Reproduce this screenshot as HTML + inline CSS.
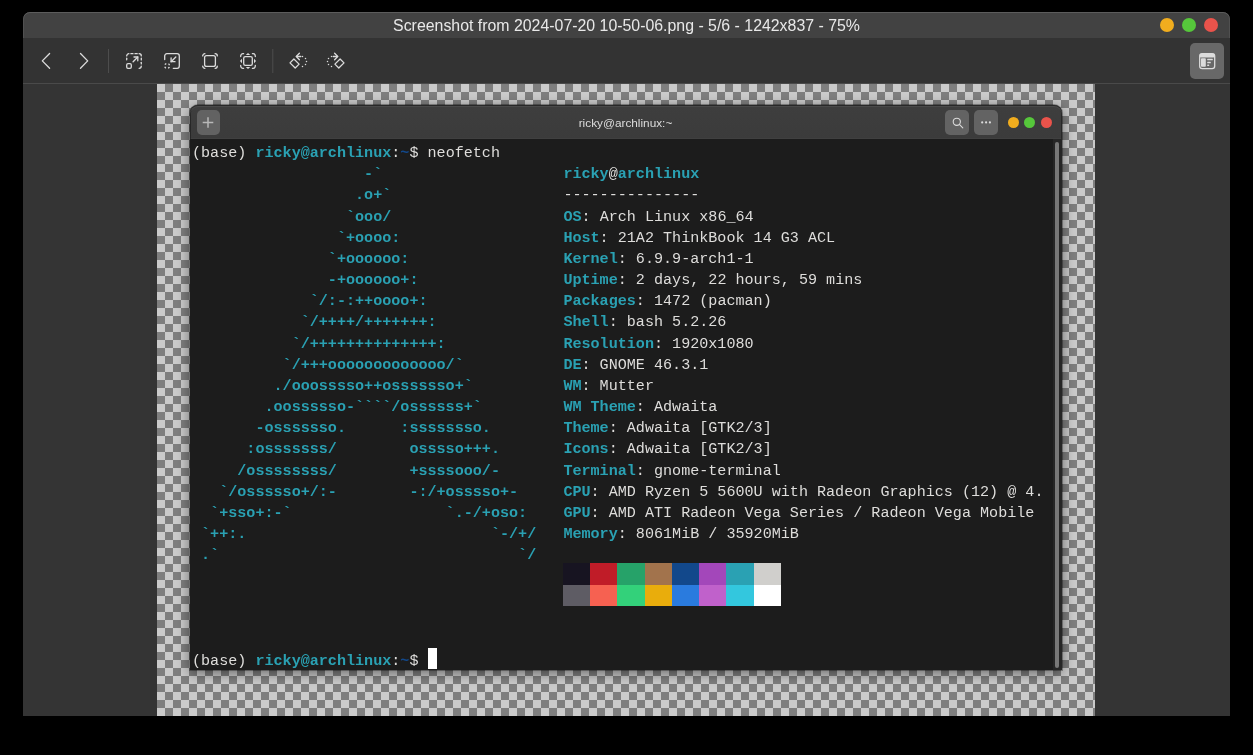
<!DOCTYPE html>
<html><head><meta charset="utf-8">
<style>
html,body{margin:0;padding:0;}
#win,#txt,#title,#ttitle{-webkit-font-smoothing:antialiased;}
#txt,#title,#ttitle{will-change:transform;}
body{width:1253px;height:755px;background:#000;position:relative;overflow:hidden;font-family:"Liberation Sans",sans-serif;}
.abs{position:absolute;}
#win{left:23px;top:12px;width:1207px;height:704px;background:#343434;border-radius:7px 7px 0 0;overflow:hidden;}
#titlebar{left:0;top:0;width:1207px;height:26px;background:#424242;box-shadow:inset 0 1px 0 #5c5c5c, inset 1px 0 0 #505050, inset -1px 0 0 #505050;border-radius:7px 7px 0 0;}
#title{left:0;top:1px;width:1207px;height:26px;line-height:26px;text-align:center;color:#e8e8e8;font-size:15.88px;}
.dot{position:absolute;width:14px;height:14px;border-radius:50%;}
#toolbar{left:0;top:26px;width:1207px;height:45px;background:#333333;}
#tbline{left:0;top:71px;width:1207px;height:1px;background:#4a4a4a;}
#content{left:0;top:72px;width:1207px;height:632px;background:#343434;}
#checker{left:134px;top:0;width:938px;height:632px;}
#term{left:167px;top:21px;width:872px;height:565px;box-shadow:0 0 0 1px rgba(0,0,0,0.3),0 3px 14px rgba(0,0,0,0.5);border-radius:8px 8px 0 0;}
#thead{left:0;top:0;width:872px;height:34px;background:linear-gradient(#3e3e3e,#3b3b3b);border-radius:8px 8px 0 0;box-shadow:inset 0 1px 0 rgba(0,0,0,0.45),inset 0 2px 0 #4a4a4a,inset 1px 0 0 rgba(0,0,0,0.35),inset -1px 0 0 rgba(0,0,0,0.35),inset 0 -1px 0 #404040;}
#tbody{left:0;top:34px;width:872px;height:531px;background:#1c1c1c;}
#ttitle{left:0;top:1px;width:871px;height:34px;line-height:34px;text-align:center;color:#dcdcdc;font-size:11.8px;}
.tbtn{position:absolute;background:#626262;border-radius:5px;}
pre{margin:0;font-family:"Liberation Mono",monospace;font-size:15.1px;line-height:21.17px;color:#dedddb;}
.c{color:#2aa1b3;font-weight:bold;}
.cn{color:#2aa1b3;}
.bl{color:#12488b;font-weight:bold;}
#txt{left:2px;top:38.3px;}
#pal{left:373px;top:458px;width:218px;height:42px;}
#cursor{left:238px;top:543px;width:9px;height:21px;background:#fff;}
#sbtrough{left:863px;top:34px;width:9px;height:531px;background:#262626;}
#sbthumb{left:865px;top:37px;width:3.5px;height:526px;background:#787878;border-radius:2px;}
</style></head><body>
<div id="win" class="abs">
  <div id="titlebar" class="abs"></div>
  <div id="title" class="abs">Screenshot from 2024-07-20 10-50-06.png - 5/6 - 1242x837 - 75%</div>
  <div class="dot" style="left:1137px;top:6px;background:#f1ad1e;"></div>
  <div class="dot" style="left:1159px;top:6px;background:#56c73b;"></div>
  <div class="dot" style="left:1181px;top:6px;background:#ea534b;"></div>
  <div id="toolbar" class="abs"></div>
  <div id="tbline" class="abs"></div>
  <div id="content" class="abs">
    <svg id="checker" class="abs" width="938" height="632" shape-rendering="crispEdges">
      <defs><pattern id="ck" width="16" height="16" patternUnits="userSpaceOnUse">
        <rect width="16" height="16" fill="#cbcbcb"/><rect x="8" y="0" width="8" height="8" fill="#7f7f7f"/><rect x="0" y="8" width="8" height="8" fill="#7f7f7f"/>
      </pattern></defs>
      <rect width="938" height="632" fill="url(#ck)"/>
    </svg>
    <div id="term" class="abs">
      <div id="thead" class="abs"></div>
      <div id="ttitle" class="abs">ricky@archlinux:~</div>
      <div id="tbody" class="abs"></div>
<pre id="txt" class="abs">(base) <span class="c">ricky@archlinux</span>:<span class="bl">~</span>$ neofetch
<span class="c">                   -`</span>                    <span class="c">ricky</span>@<span class="c">archlinux</span>
<span class="c">                  .o+`</span>                   ---------------
<span class="c">                 `ooo/</span>                   <span class="c">OS</span>: Arch Linux x86_64
<span class="c">                `+oooo:</span>                  <span class="c">Host</span>: 21A2 ThinkBook 14 G3 ACL
<span class="c">               `+oooooo:</span>                 <span class="c">Kernel</span>: 6.9.9-arch1-1
<span class="c">               -+oooooo+:</span>                <span class="c">Uptime</span>: 2 days, 22 hours, 59 mins
<span class="c">             `/:-:++oooo+:</span>               <span class="c">Packages</span>: 1472 (pacman)
<span class="c">            `/++++/+++++++:</span>              <span class="c">Shell</span>: bash 5.2.26
<span class="c">           `/++++++++++++++:</span>             <span class="c">Resolution</span>: 1920x1080
<span class="c">          `/+++ooooooooooooo/`</span>           <span class="c">DE</span>: GNOME 46.3.1
<span class="c">         ./ooosssso++osssssso+`</span>          <span class="c">WM</span>: Mutter
<span class="c">        .oossssso-````/ossssss+`</span>         <span class="c">WM Theme</span>: Adwaita
<span class="c">       -osssssso.      :ssssssso.</span>        <span class="c">Theme</span>: Adwaita [GTK2/3]
<span class="c">      :osssssss/        osssso+++.</span>       <span class="c">Icons</span>: Adwaita [GTK2/3]
<span class="c">     /ossssssss/        +ssssooo/-</span>       <span class="c">Terminal</span>: gnome-terminal
<span class="c">   `/ossssso+/:-        -:/+osssso+-</span>     <span class="c">CPU</span>: AMD Ryzen 5 5600U with Radeon Graphics (12) @ 4.
<span class="c">  `+sso+:-`                 `.-/+oso:</span>    <span class="c">GPU</span>: AMD ATI Radeon Vega Series / Radeon Vega Mobile
<span class="c"> `++:.                           `-/+/</span>   <span class="c">Memory</span>: 8061MiB / 35920MiB
<span class="c"> .`                                 `/</span>




(base) <span class="c">ricky@archlinux</span>:<span class="bl">~</span>$ </pre><div id="pal" class="abs"><div class="abs" style="left:0.00px;top:0;width:27.3px;height:21.5px;background:#171421"></div><div class="abs" style="left:27.23px;top:0;width:27.3px;height:21.5px;background:#c01c28"></div><div class="abs" style="left:54.46px;top:0;width:27.3px;height:21.5px;background:#26a269"></div><div class="abs" style="left:81.69px;top:0;width:27.3px;height:21.5px;background:#a2734c"></div><div class="abs" style="left:108.92px;top:0;width:27.3px;height:21.5px;background:#12488b"></div><div class="abs" style="left:136.15px;top:0;width:27.3px;height:21.5px;background:#a347ba"></div><div class="abs" style="left:163.38px;top:0;width:27.3px;height:21.5px;background:#2aa1b3"></div><div class="abs" style="left:190.61px;top:0;width:27.3px;height:21.5px;background:#d0cfcc"></div><div class="abs" style="left:0.00px;top:21.5px;width:27.3px;height:21.3px;background:#5e5c64"></div><div class="abs" style="left:27.23px;top:21.5px;width:27.3px;height:21.3px;background:#f66151"></div><div class="abs" style="left:54.46px;top:21.5px;width:27.3px;height:21.3px;background:#33d17a"></div><div class="abs" style="left:81.69px;top:21.5px;width:27.3px;height:21.3px;background:#e9ad0c"></div><div class="abs" style="left:108.92px;top:21.5px;width:27.3px;height:21.3px;background:#2a7bde"></div><div class="abs" style="left:136.15px;top:21.5px;width:27.3px;height:21.3px;background:#c061cb"></div><div class="abs" style="left:163.38px;top:21.5px;width:27.3px;height:21.3px;background:#33c7de"></div><div class="abs" style="left:190.61px;top:21.5px;width:27.3px;height:21.3px;background:#ffffff"></div></div><div id="cursor" class="abs"></div><div id="sbtrough" class="abs"></div><div id="sbthumb" class="abs"></div>
    </div>
  </div>
</div>
<div class="abs" style="left:1190px;top:43px;width:34px;height:36px;background:#686868;border-radius:5px;"></div>
<div class="abs" style="left:197px;top:110px;width:23px;height:25px;background:#626262;border-radius:5px;"></div>
<div class="abs" style="left:945px;top:110px;width:24px;height:25px;background:#636363;border-radius:5px;"></div>
<div class="abs" style="left:974px;top:110px;width:24px;height:25px;background:#636363;border-radius:5px;"></div>
<div class="dot" style="left:1007.8px;top:117px;width:11px;height:11px;background:#f1ad1e;"></div>
<div class="dot" style="left:1024.4px;top:117px;width:11px;height:11px;background:#56c73b;"></div>
<div class="dot" style="left:1040.9px;top:117px;width:11px;height:11px;background:#ea534b;"></div>
<svg class="abs" style="left:0;top:0;" width="1253" height="755" viewBox="0 0 1253 755">
<g fill="none" stroke="#dcdcdc" stroke-width="1.3" stroke-linecap="round" stroke-linejoin="round">
 <g transform="translate(34,49)"><path d="M15.6,4.5 L8.3,11.9 L15.6,19.3"/></g>
 <g transform="translate(74,49)"><path d="M6.5,4.5 L13.7,11.9 L6.5,19.3"/></g>
 <g transform="translate(122,49)">
  <path d="M4.7,6.9 A2.2,2.2 0 0 1 6.9,4.7"/>
  <path d="M8.9,4.7 H11"/><path d="M13,4.7 H15.2"/>
  <path d="M17.1,4.7 A2.2,2.2 0 0 1 19.3,6.9"/>
  <path d="M4.7,9.2 V10.8"/>
  <path d="M19.3,9.1 V10.9"/><path d="M19.3,13.3 V14.9"/>
  <path d="M19.3,17.1 A2.2,2.2 0 0 1 17.1,19.3"/>
  <rect x="4.7" y="14.7" width="4.6" height="4.6" rx="1.3"/>
  <path d="M11.1,12.7 L15.8,8"/><path d="M12,8 H15.8 V11.8"/>
 </g>
 <g transform="translate(160,49)">
  <path d="M4.7,10.5 V6.9 A2.2,2.2 0 0 1 6.9,4.7 H17.1 A2.2,2.2 0 0 1 19.3,6.9 V17.1 A2.2,2.2 0 0 1 17.1,19.3 H13.3"/>
  <circle cx="7.1" cy="16.9" r="2.5" stroke-dasharray="1.7 2.227" stroke-dashoffset="-1.11" stroke-linecap="butt"/>
  <path d="M15.8,8 L11.1,12.7"/><path d="M11.1,8.8 V12.7 H15"/>
 </g>
 <g transform="translate(198,49)">
  <path d="M4.7,6.9 A2.2,2.2 0 0 1 6.9,4.7"/>
  <path d="M17.1,4.7 A2.2,2.2 0 0 1 19.3,6.9"/>
  <path d="M19.3,17.1 A2.2,2.2 0 0 1 17.1,19.3"/>
  <path d="M6.9,19.3 A2.2,2.2 0 0 1 4.7,17.1"/>
  <rect x="6.6" y="6.6" width="10.8" height="10.8" rx="2"/>
 </g>
 <g transform="translate(236,49)">
  <path d="M4.7,7.6 V6.9 A2.2,2.2 0 0 1 6.9,4.7 H7.6"/>
  <path d="M16.4,4.7 H17.1 A2.2,2.2 0 0 1 19.3,6.9 V7.6"/>
  <path d="M19.3,16.4 V17.1 A2.2,2.2 0 0 1 17.1,19.3 H16.4"/>
  <path d="M7.6,19.3 H6.9 A2.2,2.2 0 0 1 4.7,17.1 V16.4"/>
  <rect x="7.7" y="7.7" width="8.6" height="8.6" rx="1.6"/>
 </g>
 <g transform="translate(286,49)" id="rotl">
  <path d="M4,13.9 L7.9,10 L13.1,15.1 L9.2,19 Z"/>
  <path d="M10.4,7.5 H14.8"/><path d="M13.4,4.3 L10.3,7.5 L13.4,10.7"/>
 </g>
 <g transform="translate(348,49) scale(-1,1)">
  <path d="M4,13.9 L7.9,10 L13.1,15.1 L9.2,19 Z"/>
  <path d="M10.4,7.5 H14.8"/><path d="M13.4,4.3 L10.3,7.5 L13.4,10.7"/>
 </g>
 <g transform="translate(1180,38)">
  <rect x="19.7" y="15.6" width="15" height="15" rx="2.6"/>
 </g>
 <circle cx="956.8" cy="121.8" r="3.6" stroke-width="1.1"/>
 <path d="M959.6,124.7 L962.8,127.8" stroke-width="1.1"/>
 <path d="M202.7,122.5 H213.3 M208,117.2 V127.8" stroke="#b8b8b8" stroke-width="1.5" stroke-linecap="butt"/>
</g>
<g fill="#dcdcdc">
 <g transform="translate(236,49)">
  <path d="M12,4 L14.2,6 H9.8 Z"/><path d="M12,20 L14.2,18 H9.8 Z"/>
  <path d="M4,12 L6,9.8 V14.2 Z"/><path d="M20,12 L18,9.8 V14.2 Z"/>
 </g>
 <g transform="translate(286,49)">
  <circle cx="16.5" cy="7.5" r="0.75"/><circle cx="19.5" cy="9.5" r="0.75"/><circle cx="20.5" cy="12.5" r="0.75"/><circle cx="19.5" cy="15.5" r="0.75"/><circle cx="16.5" cy="17.5" r="0.75"/>
 </g>
 <g transform="translate(348,49) scale(-1,1)">
  <circle cx="16.5" cy="7.5" r="0.75"/><circle cx="19.5" cy="9.5" r="0.75"/><circle cx="20.5" cy="12.5" r="0.75"/><circle cx="19.5" cy="15.5" r="0.75"/><circle cx="16.5" cy="17.5" r="0.75"/>
 </g>
 <rect x="1199.7" y="53.6" width="15" height="4" rx="1.5"/>
 <rect x="1201" y="58.2" width="4.8" height="8.6" rx="0.8"/>
 <rect x="1207.2" y="58.8" width="5.6" height="1.4" rx="0.5"/>
 <rect x="1207.2" y="61.8" width="3.6" height="1.4" rx="0.5"/>
 <rect x="1207.2" y="64.6" width="2" height="1.4" rx="0.5"/>
 <circle cx="982.2" cy="122.4" r="1.1"/><circle cx="986.1" cy="122.4" r="1.1"/><circle cx="989.9" cy="122.4" r="1.1"/>
</g>
<path d="M108.5,49 V73 M272.8,49 V73" stroke="#4d4d4d" stroke-width="1"/>
</svg>
</body></html>
